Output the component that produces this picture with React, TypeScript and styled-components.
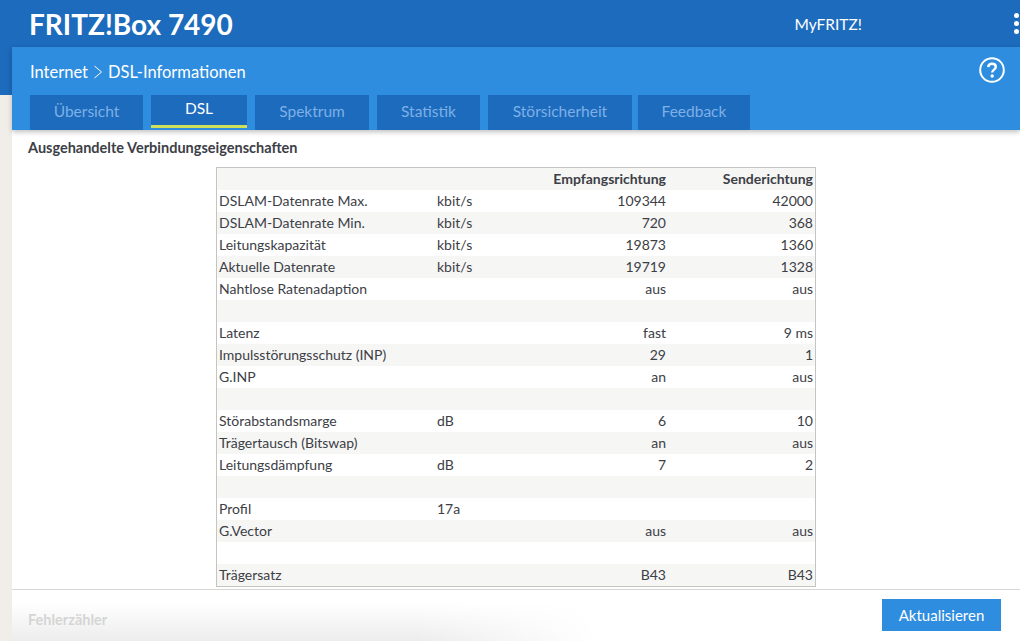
import React from "react";
import styled, { createGlobalStyle } from "styled-components";

const Global = createGlobalStyle`
  html, body { margin: 0; padding: 0; height: 100%; overflow: hidden; }
  body { font-family: "Lato", "Noto Sans", sans-serif; background: #f1eeea; color: #3c4046; }
`;

const Page = styled.div`
  width: 1020px;
  height: 641px;
  position: relative;
  overflow: hidden;
  display: flex;
  flex-direction: column;
`;

const Header = styled.header`
  height: 47px;
  background: #1c6bbd;
  display: flex;
  align-items: center;
  padding-left: 29px;
  color: #fff;
  flex: none;
`;

const Logo = styled.div`
  font-size: 28px;
  font-weight: 700;
  letter-spacing: 0;
  flex: 1;
`;

const MyFritz = styled.div`
  font-size: 15.5px;
  margin-right: 152px;
`;

const Dots = styled.div`
  display: flex;
  flex-direction: column;
  gap: 3px;
  margin-right: 1px;
  span {
    width: 5px;
    height: 5px;
    border-radius: 50%;
    background: #fff;
  }
`;

const LeftBand = styled.div`
  flex: none;
  height: 83px;
  background: linear-gradient(#1c6bbd 0 48px, #f1eeea 48px);
  padding-left: 12px;
  position: relative;
  z-index: 2;
`;

const SubHeader = styled.div`
  height: 83px;
  background: #2f8de0;
  box-shadow: 0 2px 5px rgba(0, 0, 0, 0.25);
  display: flex;
  flex-direction: column;
  padding-left: 18px;
  position: relative;
`;

const Crumbs = styled.div`
  height: 48px;
  display: flex;
  align-items: center;
  color: #fff;
  font-size: 16.5px;
  gap: 4px;
  padding-top: 2px;
  box-sizing: border-box;
`;

const HelpIcon = styled.svg`
  position: absolute;
  right: 15px;
  top: 10px;
`;

const Tabs = styled.nav`
  display: flex;
  height: 35px;
`;

const Tab = styled.div<{ $w: number; $gap: number; $active?: boolean }>`
  width: ${(p) => p.$w}px;
  margin-right: ${(p) => p.$gap}px;
  height: 35px;
  box-sizing: border-box;
  background: #1c6bbd;
  color: ${(p) => (p.$active ? "#ffffff" : "#7fb0e6")};
  font-size: 15.5px;
  display: flex;
  align-items: center;
  justify-content: center;
  padding-bottom: 4px;
  border-bottom: ${(p) => (p.$active ? "3px solid #cfe05a" : "none")};
  margin-bottom: 0;
  height: ${(p) => (p.$active ? "33px" : "35px")};
`;

const Main = styled.main`
  flex: 1;
  margin-left: 12px;
  background: #fff;
  display: flex;
  flex-direction: column;
  min-height: 0;
`;

const Content = styled.div`
  height: 460px;
  flex: none;
  box-sizing: border-box;
  border-bottom: 1px solid #d6d6d4;
`;

const Title = styled.h2`
  margin: 0;
  padding: 9px 0 0 16px;
  height: 37px;
  box-sizing: border-box;
  font-size: 14.5px;
  line-height: 18px;
  font-weight: 700;
  color: #3c4046;
`;

const Table = styled.table`
  margin-left: 204px;
  width: 600px;
  border: 1px solid #c4c4c0;
  border-collapse: separate;
  border-spacing: 0;
  table-layout: fixed;
  font-size: 14px;
  color: #3c4046;
`;

const Row = styled.tr`
  height: 22px;
  &:nth-child(odd) {
    background: #f6f6f5;
  }
`;

const Cell = styled.td<{ $w?: number; $right?: boolean; $bold?: boolean }>`
  padding: 0 2px;
  height: 22px;
  line-height: 22px;
  white-space: nowrap;
  ${(p) => (p.$w ? `width: ${p.$w}px;` : "")}
  text-align: ${(p) => (p.$right ? "right" : "left")};
  font-weight: ${(p) => (p.$bold ? 700 : 400)};
  box-sizing: border-box;
`;

const Footer = styled.footer`
  flex: 1;
  background: linear-gradient(100deg, #e9e9e9 0%, #f8f8f8 20%, #fff 52%),
    #fff;
  background: linear-gradient(#fff 0%, #fff 25%, #ececec 100%);
  display: flex;
  align-items: flex-start;
  justify-content: space-between;
  padding: 9px 19px 0 16px;
  position: relative;
`;

const Fade = styled.div`
  position: absolute;
  inset: 0;
  background: linear-gradient(90deg, transparent 0%, transparent 40%, #fff 58%);
`;

const Counter = styled.div`
  font-size: 14.5px;
  font-weight: 700;
  color: #d5d5d5;
  margin-top: 12px;
  position: relative;
`;

const Button = styled.button`
  width: 119px;
  height: 32px;
  border: none;
  background: #2f8de0;
  color: #fff;
  font-family: inherit;
  font-size: 15px;
  padding: 0;
  position: relative;
`;

const rows: [string, string, string, string][] = [
  ["DSLAM-Datenrate Max.", "kbit/s", "109344", "42000"],
  ["DSLAM-Datenrate Min.", "kbit/s", "720", "368"],
  ["Leitungskapazität", "kbit/s", "19873", "1360"],
  ["Aktuelle Datenrate", "kbit/s", "19719", "1328"],
  ["Nahtlose Ratenadaption", "", "aus", "aus"],
  ["", "", "", ""],
  ["Latenz", "", "fast", "9 ms"],
  ["Impulsstörungsschutz (INP)", "", "29", "1"],
  ["G.INP", "", "an", "aus"],
  ["", "", "", ""],
  ["Störabstandsmarge", "dB", "6", "10"],
  ["Trägertausch (Bitswap)", "", "an", "aus"],
  ["Leitungsdämpfung", "dB", "7", "2"],
  ["", "", "", ""],
  ["Profil", "17a", "", ""],
  ["G.Vector", "", "aus", "aus"],
  ["", "", "", ""],
  ["Trägersatz", "", "B43", "B43"],
];

const tabs = [
  { label: "Übersicht", w: 113, gap: 8 },
  { label: "DSL", w: 96, gap: 8, active: true },
  { label: "Spektrum", w: 114, gap: 8 },
  { label: "Statistik", w: 103, gap: 8 },
  { label: "Störsicherheit", w: 144, gap: 6 },
  { label: "Feedback", w: 112, gap: 0 },
];

export default function App() {
  return (
    <Page>
      <Global />
      <Header>
        <Logo>FRITZ!Box 7490</Logo>
        <MyFritz>MyFRITZ!</MyFritz>
        <Dots>
          <span />
          <span />
          <span />
        </Dots>
      </Header>
      <LeftBand>
        <SubHeader>
          <Crumbs>
            Internet
            <svg width="12" height="16" viewBox="0 0 12 16" fill="none">
              <path d="M2.5 2 L9.5 8 L2.5 14" stroke="#fff" strokeWidth="1" />
            </svg>
            DSL-Informationen
          </Crumbs>
          <HelpIcon width="26" height="26" viewBox="0 0 26 26" fill="none">
            <circle cx="13" cy="13" r="11.8" stroke="#fff" strokeWidth="2" />
            <path
              d="M9.2 10.2 C9.4 7.8 11 6.8 13 6.8 C15.2 6.8 16.8 8 16.8 10 C16.8 12.6 13.2 12.8 13.2 15.6"
              stroke="#fff"
              strokeWidth="2.4"
            />
            <circle cx="13.2" cy="19" r="1.7" fill="#fff" />
          </HelpIcon>
          <Tabs>
            {tabs.map((t) => (
              <Tab key={t.label} $w={t.w} $gap={t.gap} $active={t.active}>
                {t.label}
              </Tab>
            ))}
          </Tabs>
        </SubHeader>
      </LeftBand>
      <Main>
        <Content>
          <Title>Ausgehandelte Verbindungseigenschaften</Title>
          <Table>
            <tbody>
              <Row>
                <Cell $w={218} />
                <Cell $w={90} />
                <Cell $w={143} $right $bold>
                  Empfangsrichtung
                </Cell>
                <Cell $w={147} $right $bold>
                  Senderichtung
                </Cell>
              </Row>
              {rows.map((r, i) => (
                <Row key={i}>
                  <Cell>{r[0]}</Cell>
                  <Cell>{r[1]}</Cell>
                  <Cell $right>{r[2]}</Cell>
                  <Cell $right>{r[3]}</Cell>
                </Row>
              ))}
            </tbody>
          </Table>
        </Content>
        <Footer>
          <Fade />
          <Counter>Fehlerzähler</Counter>
          <Button>Aktualisieren</Button>
        </Footer>
      </Main>
    </Page>
  );
}
